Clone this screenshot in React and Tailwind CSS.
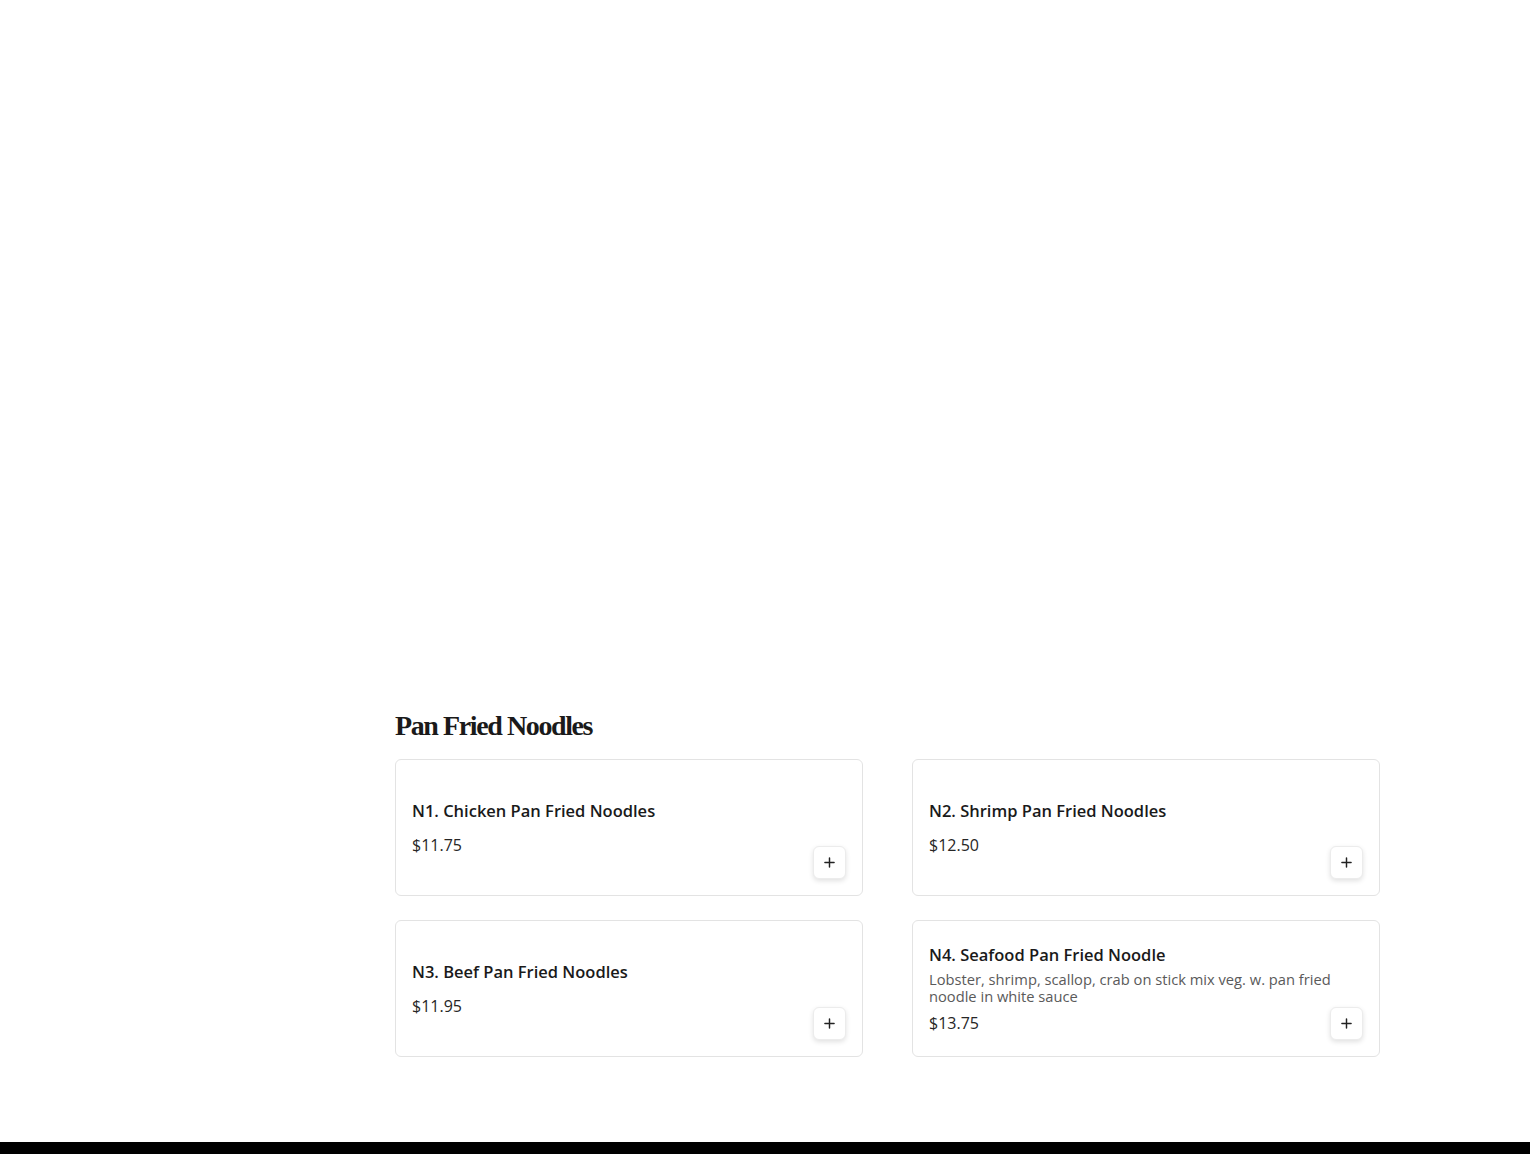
const items = [
  { name: "N1. Chicken Pan Fried Noodles", price: "$11.75" },
  { name: "N2. Shrimp Pan Fried Noodles", price: "$12.50" },
  { name: "N3. Beef Pan Fried Noodles", price: "$11.95" },
  {
    name: "N4. Seafood Pan Fried Noodle",
    desc: "Lobster, shrimp, scallop, crab on stick mix veg. w. pan fried noodle in white sauce",
    price: "$13.75",
  },
];

function PlusIcon() {
  return (
    <svg width="11" height="11" viewBox="0 0 12 12" fill="none" stroke="#222" strokeWidth="1.6" strokeLinecap="round">
      <path d="M6 1v10M1 6h10" />
    </svg>
  );
}

function MenuCard({ item }) {
  return (
    <div className="relative flex min-h-[137px] flex-col justify-center rounded-md border border-[#e3e3e3] bg-white p-4">
      <h3 className="text-[16.5px] leading-[24px] font-semibold text-[#1a1a1a]">{item.name}</h3>
      {item.desc && (
        <p className="mt-1 text-[14.7px] leading-[17px] text-[#5a5a5a]">{item.desc}</p>
      )}
      <div className={`${item.desc ? "mt-[6px]" : "mt-[10px]"} text-[16px] leading-[24px] text-[#262626]`}>
        {item.price}
      </div>
      <button className="absolute right-4 bottom-4 flex h-[33px] w-[33px] items-center justify-center rounded-md border border-[#ececec] bg-white shadow-[0_2px_5px_rgba(0,0,0,0.12)]">
        <PlusIcon />
      </button>
    </div>
  );
}

export default function App() {
  return (
    <div className="min-h-screen bg-white font-['Open_Sans',sans-serif]">
      {/* ===== Hero area (empty) ===== */}
      <div className="h-[708px]" />

      {/* ===== Menu section ===== */}
      <div className="flex">
        <aside className="w-[395px] shrink-0" />
        <section className="w-[985px]">
          <h2 className="mb-[15px] font-['Liberation_Serif',serif] text-[28px] leading-[36px] font-black tracking-[-0.05em] text-[#1a1a1a]">
            Pan Fried Noodles
          </h2>
          <div className="grid grid-cols-2 gap-x-[49px] gap-y-[24px]">
            {items.map((item) => (
              <MenuCard key={item.name} item={item} />
            ))}
          </div>
        </section>
      </div>

      <div className="h-[85px]" />

      {/* ===== Footer ===== */}
      <footer className="h-[120px] bg-black" />
    </div>
  );
}
